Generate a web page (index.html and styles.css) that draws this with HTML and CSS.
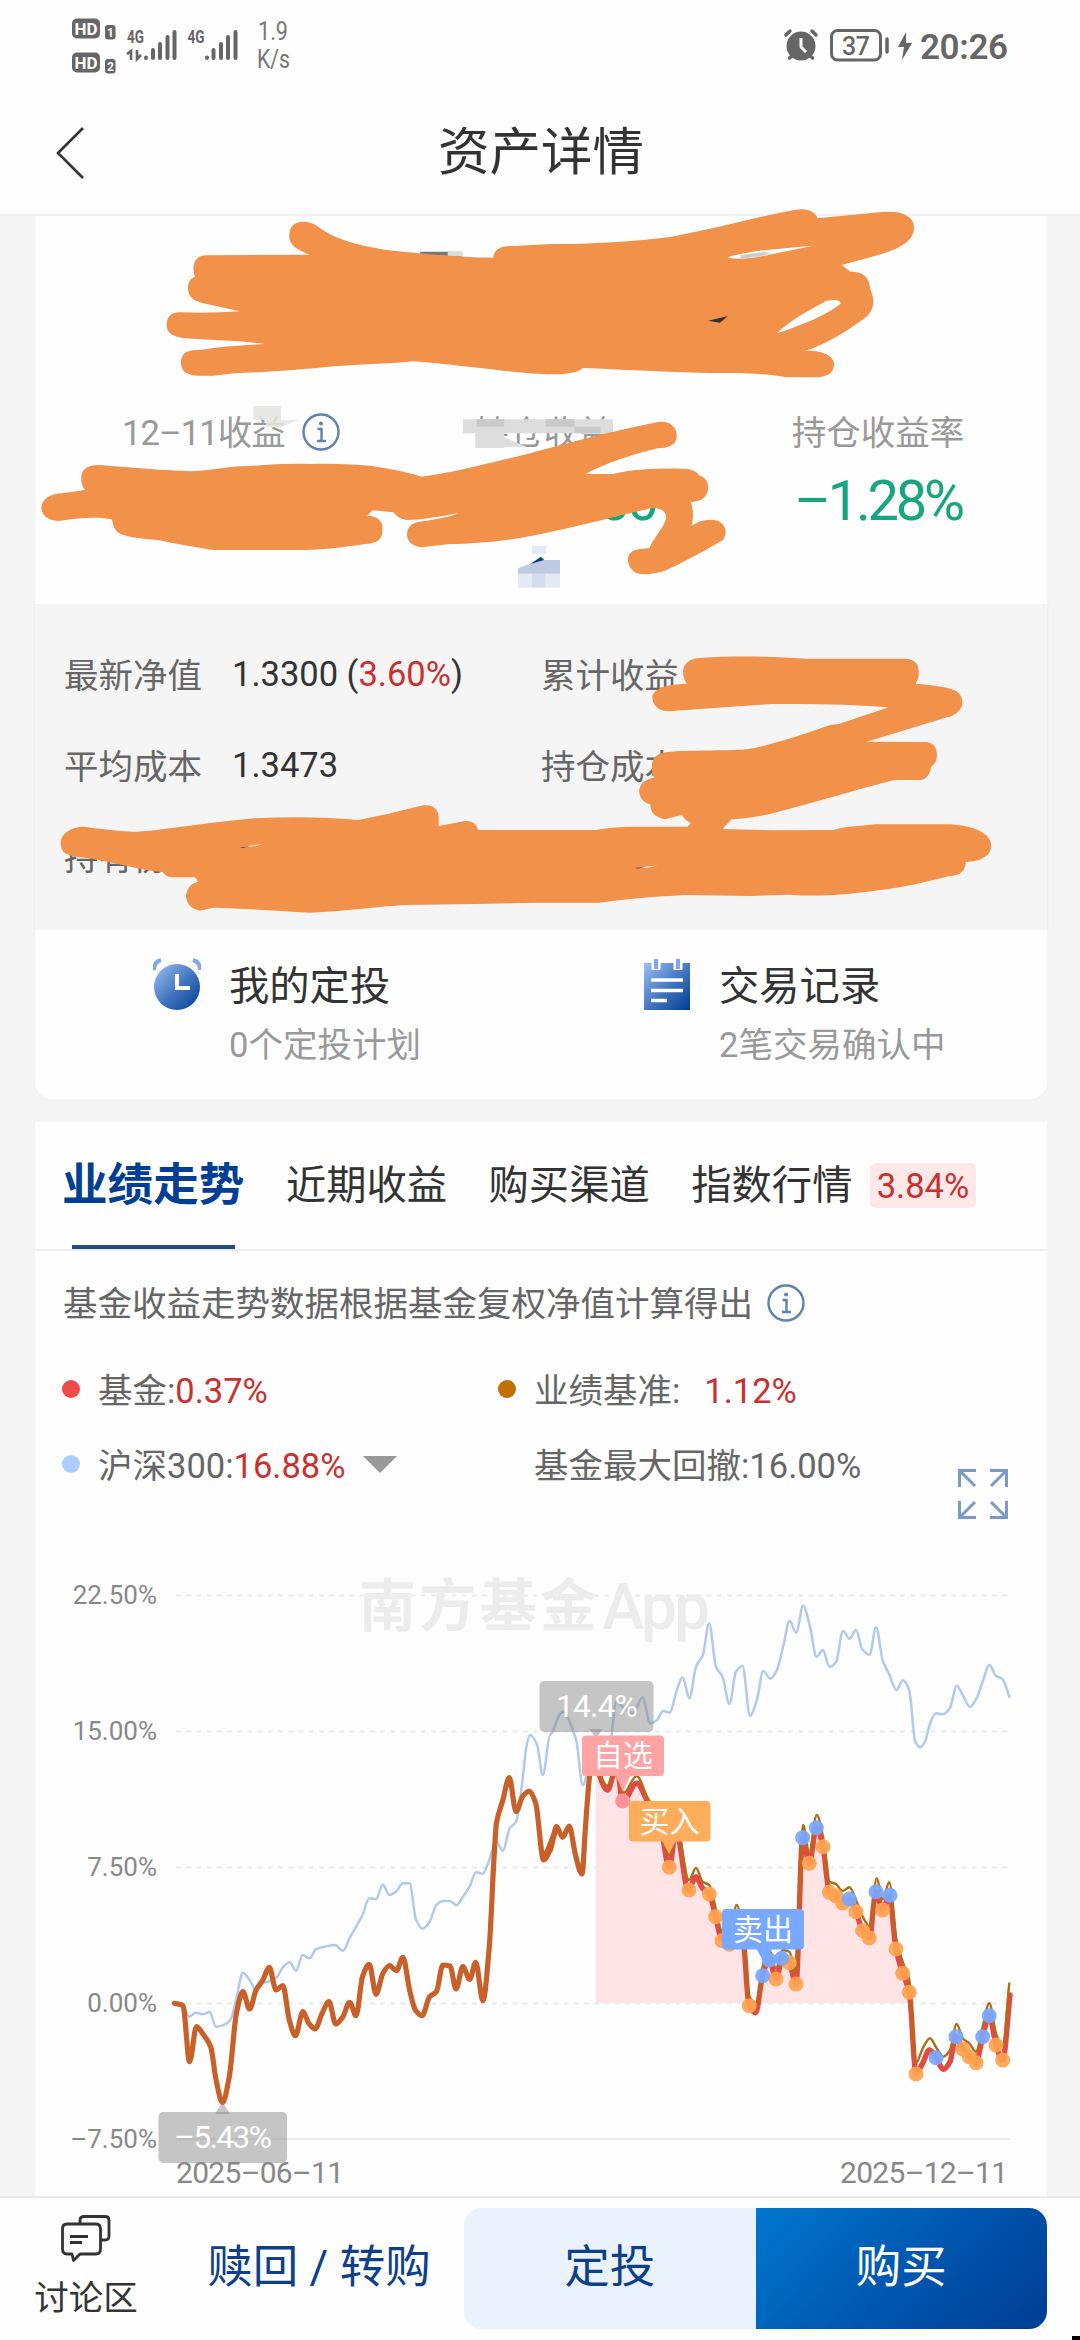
FILE: index.html
```html
<!DOCTYPE html>
<html lang="zh-CN">
<head>
<meta charset="utf-8">
<title>资产详情</title>
<link rel="stylesheet" href="styles.css">
</head>
<body>
<div class="screen">
  <header class="top">
    <div class="status">
      <svg class="status-left" width="280" height="70" viewBox="60 10 280 70">
        <g fill="#666">
          <rect x="72" y="18.500" width="28" height="20" rx="5"/><rect x="72" y="52.500" width="28" height="20" rx="5"/>
          <rect x="105" y="25" width="10.500" height="14.500" rx="3"/><rect x="105" y="59" width="10.500" height="14.500" rx="3"/>
        </g>
        <g class="sig-badge">
          <text x="74.500" y="34.500" textLength="23" lengthAdjust="spacingAndGlyphs">HD</text>
          <text x="74.500" y="68.500" textLength="23" lengthAdjust="spacingAndGlyphs">HD</text>
          <text class="sig-sub" x="107" y="37">1</text><text class="sig-sub" x="107" y="71">2</text>
        </g>
        <g class="sig-net">
          <text x="127" y="43" textLength="17" lengthAdjust="spacingAndGlyphs">4G</text>
          <text x="187.500" y="43" textLength="17" lengthAdjust="spacingAndGlyphs">4G</text>
        </g>
        <g stroke="#666" stroke-width="4" stroke-linecap="round" fill="none">
          <path d="M146 57.500v.5M153 50v8M160 44v14M167.500 37v21M174.500 32v26"/>
          <path d="M207 57.500v.5M213.500 50v8M221 44v14M228 37v21M235.500 32v26"/>
          <path stroke-width="2.600" stroke-linecap="butt" d="M127 54l4-3v9M137 50v9l4-4"/>
        </g>
        <text class="sig-speed" x="258" y="40" textLength="30" lengthAdjust="spacingAndGlyphs">1.9</text>
        <text class="sig-speed" x="257" y="67.500" textLength="33" lengthAdjust="spacingAndGlyphs">K/s</text>
      </svg>
      <svg class="status-right" width="250" height="70" viewBox="770 10 250 70">
        <circle cx="801" cy="46" r="14.500" fill="#666"/>
        <g fill="none" stroke="#666" stroke-width="3.500" stroke-linecap="round">
          <path d="M786 35l4-4M816 35l-4-4M789.500 58l3-3M812.500 58l-3-3"/>
          <rect x="831.500" y="30.500" width="49" height="29.500" rx="6" stroke-width="3"/>
          <path d="M887 39v13"/>
        </g>
        <path d="M801 38v9l5 5" fill="none" stroke="#fff" stroke-width="3"/>
        <path d="M906 32l-8 15h6l-2 13 10-17h-6z" fill="#666"/>
        <text class="st-batt" x="842" y="54.500" textLength="28">37</text>
        <text class="st-time" x="920" y="59" textLength="88">20:26</text>
      </svg>
    </div>
    <div class="nav">
      <svg class="back" width="30" height="54" viewBox="0 0 30 54"><path d="M27 2L2 27l25 25" fill="none" stroke="#333" stroke-width="2.600"/></svg>
      <h1>资产详情</h1>
    </div>
  </header>

  <section class="card asset">
    <div class="stats">
      <div class="stat s1"><div class="label"><span>12–11收益</span>
        <svg class="info" viewBox="0 0 38 38"><circle cx="19" cy="19" r="17.500"/><circle class="dot" cx="19" cy="10.500" r="2"/><path d="M15.500 16H19.500V28M15 28h9"/></svg></div></div>
      <div class="stat s2"><div class="label"><span>持仓收益</span></div><div class="value">00</div></div>
      <div class="stat s3"><div class="label"><span>持仓收益率</span></div><div class="value">–1.28%</div></div>
    </div>
    <div class="details">
      <div class="pair"><span class="k">最新净值</span><span class="v">1.3300 (<b>3.60%</b>)</span></div>
      <div class="pair"><span class="k">累计收益</span></div>
      <div class="pair"><span class="k">平均成本</span><span class="v">1.3473</span></div>
      <div class="pair"><span class="k">持仓成本</span></div>
      <div class="pair"><span class="k">持有份额</span></div>
    </div>
    <div class="actions">
      <div class="action">
        <svg width="48" height="54" viewBox="0 0 48 54">
          <defs><linearGradient id="blue" x1="0" y1="0" x2="1" y2="1"><stop offset="0" stop-color="#9dc0f5"/><stop offset=".55" stop-color="#3f72bd"/><stop offset="1" stop-color="#003c92"/></linearGradient></defs>
          <path d="M1 13Q1 5 8 3M47 13Q47 5 40 3" fill="none" stroke="#7fa8e6" stroke-width="4"/>
          <circle cx="24" cy="30" r="23" fill="url(#blue)"/><path d="M24 17v14h13" fill="none" stroke="#fff" stroke-width="4"/>
        </svg>
        <div><div class="a-title">我的定投</div><div class="a-sub">0个定投计划</div></div>
      </div>
      <div class="action">
        <svg width="48" height="54" viewBox="0 0 48 54">
          <rect x="1" y="6" width="46" height="47" fill="url(#blue)"/>
          <path d="M13 2v11M35 2v11" stroke="#fff" stroke-width="9"/><path d="M13 2v10M35 2v10" stroke="#7fa8e6" stroke-width="4"/>
          <path d="M8 23h32M8 33.500h32M8 43.500h16" stroke="#fff" stroke-width="3.500"/>
        </svg>
        <div><div class="a-title">交易记录</div><div class="a-sub">2笔交易确认中</div></div>
      </div>
    </div>
  </section>

  <section class="card perf">
    <nav class="tabs">
      <span class="tab active">业绩走势</span><span class="tab">近期收益</span><span class="tab">购买渠道</span><span class="tab">指数行情</span><span class="badge">3.84%</span>
    </nav>
    <div class="note"><span>基金收益走势数据根据基金复权净值计算得出</span>
      <svg class="info" viewBox="0 0 38 38"><circle cx="19" cy="19" r="17.500"/><circle class="dot" cx="19" cy="10.500" r="2"/><path d="M15.500 16H19.500V28M15 28h9"/></svg>
    </div>
    <div class="legend">
      <div class="item"><i class="bullet fund"></i><span>基金:<b>0.37%</b></span></div>
      <div class="item"><i class="bullet base"></i><span>业绩基准:<b class="gap">1.12%</b></span></div>
      <div class="item"><i class="bullet index"></i><span>沪深300:<b>16.88%</b></span><i class="caret"></i></div>
      <div class="item"><i class="bullet"></i><span>基金最大回撤:16.00%</span></div>
      <svg class="expand" width="50" height="50" viewBox="0 0 50 50"><path d="M1.500 18V1.500H18M2 2l15 15M32 1.500h16.500V18M48 2L33 17M1.500 32v16.500H18M2 48l15-15M48.500 32v16.500H32M48 48L33 33"/></svg>
    </div>
    <svg class="chart" width="1012" height="656" viewBox="35 1540 1012 656">
      <g class="watermark"><text x="359" y="1626" textLength="238">南方基金</text><text class="app" x="602" y="1629" textLength="108">App</text></g>
      <g class="grid"><path d="M176 1595.500H1010M176 1731.500H1010M176 1867.500H1010M176 2003.500H1010"/></g>
      <path class="axis" d="M176 2139H1010"/>
      <g class="ylabels"><text x="157" y="1604">22.50%</text><text x="157" y="1740">15.00%</text><text x="157" y="1876">7.50%</text><text x="157" y="2012">0.00%</text><text x="157" y="2148">–7.50%</text></g>
      <g class="xlabels"><text x="176" y="2182.500" textLength="168">2025–06–11</text><text x="840" y="2182.500" textLength="168">2025–12–11</text></g>
      <g id="plot"></g>
      <g class="tip">
        <path d="M589 1729h14l-7 9zM215 2114l7.500-12 7.500 12z"/>
        <rect x="539.500" y="1681" width="114" height="51" rx="5"/><rect x="158.500" y="2112" width="128.500" height="51" rx="5"/>
        <text x="556" y="1717" textLength="82">14.4%</text><text x="174" y="2147.500" textLength="98">–5.43%</text>
      </g>
      <g class="tag">
        <path fill="#ffa3a5" d="M615 1774h16l-8 18z"/><rect fill="#ffa3a5" x="582" y="1735.500" width="82" height="40.500" rx="4"/>
        <path fill="#ffad5a" d="M661 1839h16l-8 15z"/><rect fill="#ffad5a" x="629" y="1801" width="81.500" height="40.500" rx="4"/>
        <path fill="#78a8ff" d="M756 1948h16l-6 18z"/><rect fill="#78a8ff" x="722" y="1909" width="82" height="40.500" rx="4"/>
        <text x="623" y="1766">自选</text><text x="669.500" y="1831.500">买入</text><text x="763" y="1939.500">卖出</text>
      </g>
    </svg>
  </section>

  <footer class="bottom">
    <div class="talk">
      <svg width="50" height="48" viewBox="0 0 50 48" fill="none" stroke="#333" stroke-width="2.800" stroke-linejoin="round">
        <path d="M19 9V5Q19 1.500 23 1.500H44Q48 1.500 48 5V21Q48 25 44 25H40"/>
        <path d="M6 9H35Q39.500 9 39.500 14V34Q39.500 39 35 39H19L12.500 45.500 11 39H6Q1.500 39 1.500 34V14Q1.500 9 6 9Z"/><path d="M9 21.500H27M9 27.500H21"/>
      </svg>
      <span>讨论区</span>
    </div>
    <div class="redeem">赎回 / 转购</div>
    <div class="buttons"><div class="plan">定投</div><div class="buy">购买</div></div>
  </footer>

  <svg class="marks" width="1080" height="940" viewBox="0 0 1080 940">
    <g transform="translate(0 200) scale(.6888 .33333)">
      <path fill="#777" d="M610 155h60v20h-60z"/><path fill="#ddd" d="M650 155h22v14h-22zM672 658h218v42h-218zM690 700h42v44h-42zM732 712l34 30h-34z"/>
      <path fill="#c9c9c9" d="M692 658h40v22h-40zM792 658h42v22h-42zM834 680h38v20h-38z"/>
      <path fill="#e4e4e2" d="M368 618h40v42h-40zM386 660h48l-26 22h-22z" fill-opacity=".85"/>
      <path fill="#e4eaf3" d="M772 1038h21v25h-21zM752 1121h20v42h-20zM792 1121h21v42h-21z"/><path fill="#d5dcec" d="M772 1121h20v42h-20z"/>
      <path fill="#becae1" d="M752 1105L785 1080H813V1121H752Z"/><path fill="#0b3c8e" d="M770 1092L785 1070 790 1080Z"/>
      <g fill="#f1914a" fill-rule="evenodd">
      <path d="M420 105C420 60 445 55 462 80C490 125 540 148 600 158C650 168 690 173 716 173C718 145 728 137 745 138L800 132C860 132 920 125 975 110C1040 85 1100 50 1155 29C1175 22 1185 40 1187 55L1280 36C1310 30 1328 50 1327 85C1326 120 1310 145 1275 165L1222 195 1235 215C1258 215 1262 240 1264 270C1272 310 1268 340 1248 365C1225 400 1200 430 1170 452C1200 450 1212 475 1211 495C1210 520 1200 533 1180 532L1140 531C1120 522 1080 518 1030 519C960 516 900 508 846 504C840 520 815 525 790 522C740 518 670 495 600 484C560 492 520 494 490 498C430 510 380 517 340 520L310 527H285C265 523 262 505 263 480C265 455 275 449 290 450C320 440 350 437 384 432C350 422 305 420 268 415C248 410 241 395 242 370C243 345 252 334 264 337C290 340 320 338 348 334L295 310C275 300 273 280 273 262C273 245 277 235 283 231C278 200 281 166 300 166L450 164C430 150 418 130 420 105ZM1056 172C1090 150 1140 145 1180 137L1110 167C1090 178 1060 178 1056 172ZM1128 400C1150 355 1180 325 1200 302C1215 296 1222 303 1220 312C1200 345 1165 375 1128 400Z"/>
      <path d="M150 796C190 803 240 812 280 814C310 810 330 800 350 799C390 795 415 790 450 792C490 790 520 795 540 798C570 808 595 818 612 830C650 820 680 805 740 775C800 745 870 700 950 668C975 655 985 690 982 715C981 735 970 745 955 745C915 765 880 790 850 822H890C920 808 950 805 990 806C1005 806 1012 815 1015 826C1027 835 1029 855 1028 868C1026 890 1020 905 1003 906C1007 930 1007 955 1004 977C1015 960 1030 955 1042 962C1055 975 1056 1000 1050 1020C1020 1055 990 1090 965 1112C945 1125 925 1128 918 1110C908 1090 908 1050 930 1047L943 1044C950 1010 965 980 967 955C968 935 960 922 945 925C900 945 850 975 800 995C750 1020 700 1030 650 1033L612 1042C597 1040 590 1020 591 1000C592 975 600 965 620 962C640 955 655 950 665 939C640 950 610 960 590 960C578 955 575 945 571 937L541 931 533 947C552 948 557 970 555 995C555 1015 548 1030 530 1032C500 1042 470 1050 430 1050H310C280 1040 250 1030 230 1020C200 1015 180 1010 170 995C163 980 165 970 162 958C145 950 120 952 85 963C65 960 60 940 60 920C62 895 75 880 90 880L124 870C117 855 117 835 119 820C122 800 135 792 150 796Z"/>
      </g>
      <path fill="#333" d="M1028 362L1057 348 1045 368Z"/><path fill="#ccc" d="M1075 166l35-10 8 4-12 8-31 9z"/>
    </g>
    <g transform="translate(0 590) scale(.6888 .33333)">
      <path fill="#f1914a" d="M1020 203C1060 198 1120 198 1170 206H1315C1330 208 1334 225 1334 250C1334 265 1331 275 1329 281C1345 283 1365 288 1380 296C1395 305 1398 325 1397 345C1394 365 1385 378 1375 382L1258 455 1345 456C1358 460 1361 480 1360 500C1360 515 1356 525 1352 530C1350 550 1346 570 1335 570H1298C1240 600 1180 640 1130 665C1105 680 1080 685 1062 688L1049 717 1128 721 1210 720C1230 708 1255 708 1270 703H1380C1415 708 1439 730 1439 768C1439 795 1425 815 1402 816C1402 840 1395 858 1378 858C1340 878 1320 890 1260 905C1220 915 1190 920 1147 914L1090 918 995 915C930 922 900 930 870 938H780L690 942 590 945C540 950 500 965 450 968C400 962 350 955 310 953L290 962C275 955 270 935 270 915C272 890 280 878 288 875L283 862H250C240 860 238 850 236 846C200 840 160 815 130 805C110 800 98 797 92 785C85 765 87 735 100 722C110 708 122 708 132 713C155 718 175 725 200 725C240 720 290 700 370 685C420 680 470 680 520 690C560 675 590 658 615 646C630 642 637 660 637 685V708L675 693C688 692 692 705 694 720H865C890 710 910 710 930 710H998L1003 700C995 690 992 682 990 675L965 688C950 682 944 665 944 643C930 635 928 615 928 600C930 575 940 567 950 563C946 550 946 530 947 515C950 495 960 486 975 485C1010 480 1060 483 1085 478C1130 460 1170 430 1205 405L1218 402 1290 352C1230 342 1180 342 1120 342L970 364C952 360 947 340 947 320C950 295 965 283 997 281C992 265 990 245 993 230C998 210 1008 204 1020 203Z"/>
      <path fill="#eee" d="M350 771L380 762 372 768ZM922 834L955 826 940 833Z"/><path fill="#555" d="M348 772l14-3-9 5zM922 833l14-3-10 6z"/>
    </g>
  </svg>
  <i class="corner"></i>
</div>
<script src="chart.js"></script>
</body>
</html>
```
FILE: styles.css
```css
* { box-sizing: border-box; }
body { margin: 0; background: #f4f4f4; font-family: Roboto, "Noto Sans CJK SC", sans-serif; color: #333; }
b, i { font-weight: 400; font-style: normal; }
.screen { position: relative; width: 1080px; height: 2340px; overflow: hidden; display: flex; flex-direction: column; align-items: center; }

.top { width: 100%; height: 216px; background: #fefefe; border-bottom: 2px solid #f0f0f0; flex: none; }
.status { display: flex; justify-content: space-between; padding: 10px 60px 0; height: 94px; }
.sig-badge { fill: #fff; font-weight: 700; font-size: 17px; }
.sig-sub { font-size: 12px; }
.sig-net { fill: #666; font-weight: 700; font-size: 19px; }
.sig-speed { fill: #777; font-size: 25px; }
.st-batt { fill: #666; font-weight: 500; font-size: 25px; }
.st-time { fill: #666; font-weight: 600; font-size: 35px; }
.nav { display: grid; grid-template-columns: 120px 1fr 118px; align-items: center; height: 118px; }
.back { margin-left: 56px; }
h1 { margin: 0; font-size: 51.5px; font-weight: 400; line-height: 60px; text-align: center; }

.card { width: 1012px; margin-left: 2px; background: #fefefe; flex: none; }
.asset { height: 883px; border-radius: 0 0 17px 17px; display: flex; flex-direction: column; }
.stats { height: 388px; padding-top: 190px; display: flex; justify-content: space-between; }
.stat { display: flex; flex-direction: column; align-items: center; }
.s1 { width: 392px; }
.s1 span { letter-spacing: -0.9px; }
.s2 { width: 228px; margin-left: -49px; }
.s3 { width: 338px; }
.label { display: flex; align-items: center; gap: 17px; height: 52px; font-size: 34.5px; color: #999; white-space: nowrap; }
.label span, .note span { padding-bottom: 5px; }
.value { font-size: 56px; line-height: 87px; color: #18a680; letter-spacing: -3.2px; }
.s2 .value { align-self: flex-end; padding-right: 2px; }
.info { width: 38px; height: 38px; fill: none; stroke: #6080b0; stroke-width: 2.400; }
.info .dot { fill: #6080b0; stroke: none; }
.details { height: 326px; margin: 0 -2px; padding: 24px 0 0 29px; background: #f5f5f5; border: solid #f0f0f0; border-width: 0 2px; display: grid; grid-template-columns: 477px 1fr; grid-auto-rows: 91px; }
.pair { display: flex; align-items: center; gap: 30px; font-size: 34.5px; white-space: nowrap; }
.k { color: #666; padding-bottom: 2px; }
.v { color: #333; }
.v b, .legend b { color: #c9302f; }
.actions { display: flex; padding: 27px 0 0 118px; }
.action { width: 490px; flex: none; display: flex; gap: 28px; }
.action + .action { width: 400px; }
.a-title { font-size: 40.3px; line-height: 60px; }
.a-sub { font-size: 34.5px; line-height: 56px; color: #999; }

.perf { margin-top: 23px; height: 1074px; display: flex; flex-direction: column; }
.tabs { height: 129px; flex: none; display: flex; align-items: center; gap: 41.5px; padding: 0 27px; border-bottom: 2px solid #eee; font-size: 40.3px; white-space: nowrap; }
.tab { height: 127px; line-height: 127px; }
.active { font-size: 45.6px; font-weight: 700; color: #003f94; display: flex; flex-direction: column; align-items: center; }
.active::after { content: ""; flex: none; width: 163px; height: 4px; margin-top: -4px; background: #1f4a8c; }
.badge { margin-left: -24px; width: 106px; height: 45px; border-radius: 6px; background: #ffe8e8; color: #c9302f; font-size: 34.500px; line-height: 46px; text-align: center; }
.note { height: 104px; flex: none; padding: 0 28px; display: flex; align-items: center; gap: 14px; font-size: 34.5px; color: #666; }
.legend { position: relative; height: 185px; flex: none; padding: 0 27px; display: grid; grid-template-columns: 436px 1fr; grid-template-rows: 75px 75px; color: #666; font-size: 34.5px; }
.item { display: flex; align-items: center; white-space: nowrap; height: 68px; }
.item span { padding-bottom: 2px; }
.bullet { width: 18px; height: 18px; border-radius: 50%; margin-right: 18px; }
.fund { background: #ef4b4b; }
.base { background: #c07000; }
.index { background: #adcbff; }
.gap { margin-left: 24px; }
.caret { border: solid transparent; border-width: 17px 17px 0; border-top-color: #999; margin-left: 18px; }
.expand { position: absolute; left: 923px; top: 114px; fill: none; stroke: #7c9ac6; stroke-width: 3; }

.chart { flex: none; display: block; }
.watermark { fill: #ececec; font-weight: 700; font-size: 57px; }
.app { font-weight: 500; font-size: 64px; }
.grid { stroke: #eee; stroke-width: 2.500; stroke-dasharray: 5 5.200; }
.axis { stroke: #ececec; stroke-width: 2; }
.ylabels { fill: #888; font-size: 26px; text-anchor: end; }
.xlabels { fill: #888; font-size: 30px; }
.tip { fill: rgba(140, 140, 140, .5); }
.tip text { fill: #fff; font-size: 32px; }
.tag text { fill: #fff; font-size: 30px; text-anchor: middle; }
.plot-index { fill: none; stroke: #b0c9ec; stroke-width: 2.500; }
.plot-area { fill: #ffe4e5; }
.plot-fund { fill: none; stroke: #e24b43; stroke-width: 5.400; stroke-linejoin: round; stroke-linecap: round; }
.plot-early { fill: none; stroke: #c8602a; stroke-width: 5.200; stroke-linejoin: round; stroke-linecap: round; }
.plot-base { fill: none; stroke: #b26d14; stroke-width: 2.400; }
.buy-dot { fill: #ffa351; fill-opacity: .93; }
.sell-dot { fill: #78a8ff; fill-opacity: .93; }
.pick-dot { fill: #ff9297; }

.bottom { width: 100%; height: 144px; flex: none; background: #fefefe; border-top: 2px solid #e9e9e9; display: flex; padding-left: 35px; }
.talk { width: 102px; padding-top: 17px; display: flex; flex-direction: column; align-items: center; font-size: 34.5px; line-height: 60px; white-space: nowrap; gap: 5px; }
.redeem { width: 327px; padding-left: 37px; text-align: center; padding-right: 0; font-size: 45.500px; line-height: 140px; color: #0d4088; white-space: nowrap; }
.buttons { width: 583px; height: 121px; margin-top: 10px; border-radius: 18px; overflow: hidden; display: grid; grid-template-columns: 1fr 1fr; text-align: center; font-size: 45.500px; line-height: 120px; color: #0d4088; }
.plan { background: #eaf2fe; }
.buy { background: linear-gradient(135deg, #0077cf, #0058b0 50%, #003d94); color: #fff; }

.marks { position: absolute; left: 0; top: 0; }
.corner { position: absolute; right: 0; bottom: 0; width: 8px; height: 4px; background: #000; }
```
FILE: chart.js
```js
// Samples are stored on four drawing grids: origin and units per pixel.
const grids = {
  low:  [0, 1860, 2.8, 3],
  high: [0, 1540, 2.8, 3],
  mid:  [540, 1560, 2.904, 3],
  end:  [560, 1740, 3, 3]
};
function pts(grid, list) {
  const [ox, oy, sx, sy] = grids[grid];
  return list.trim().split(/\s+/).map(p => {
    const [x, y] = p.split(',').map(Number);
    return [ox + x / sx, oy + y / sy];
  });
}
// Monotone cubic interpolation: turning points stay on the samples.
function curve(p) {
  const n = p.length, d = [], m = [];
  for (let i = 0; i < n - 1; i++) d.push((p[i + 1][1] - p[i][1]) / (p[i + 1][0] - p[i][0]));
  m[0] = d[0]; m[n - 1] = d[n - 2];
  for (let i = 1; i < n - 1; i++) m[i] = d[i - 1] * d[i] <= 0 ? 0 : 2 * d[i - 1] * d[i] / (d[i - 1] + d[i]);
  let s = 'M' + p[0].map(v => v.toFixed(1));
  for (let i = 0; i < n - 1; i++) {
    const h = (p[i + 1][0] - p[i][0]) / 3;
    s += 'C' + [p[i][0] + h, p[i][1] + m[i] * h, p[i + 1][0] - h, p[i + 1][1] - m[i + 1] * h, p[i + 1][0], p[i + 1][1]].map(v => v.toFixed(1)).join(' ');
  }
  return s;
}
const index = [
  ...pts('low', '492,430 512,436 530,470 548,458 568,463 587,456 605,500 625,496 645,480 660,425 680,338 700,362 715,388 735,370 755,363 775,352 792,322 811,307 829,332 847,285 867,295 885,267 905,261 938,255 960,272 980,232 1015,165 1034,115 1053,117 1072,74 1090,105 1110,93 1128,70 1147,70 1165,180 1184,206 1203,185 1222,135 1240,123 1260,123 1278,136 1296,110 1315,80 1333,37 1352,41 1368,5'),
  ...pts('high', '1390,905 1408,933 1427,865 1445,845 1463,720 1474,620 1484,585 1503,612 1520,705 1540,590'),
  ...pts('mid', '27,525 65,455 105,540 124,675 150,600 175,620 195,600 208,525 221,425 240,440 270,460 298,412 320,490 340,480 358,453 377,458 396,395 414,352 434,415 453,320 473,285 491,190 511,320 530,350 550,432 569,335 588,318 610,467 630,420 648,333 669,356 688,330 707,255 725,182 744,218 764,137 784,200 803,290 821,270 841,320 860,305 880,213 899,236 918,210 936,268 957,284 976,202 995,300 1015,345 1035,390 1054,361 1072,390 1090,545 1104,562 1118,545 1133,490 1150,460 1170,463 1190,445 1210,377 1229,408 1248,441 1268,415 1287,360 1305,314 1324,347 1343,357 1364,413')
];
const early = [
  ...pts('low', '488,430 512,436 531,605 550,500 570,525 590,560 605,660 623,728 642,650 662,460 680,395 699,447 717,390 736,360 754,322 773,390 792,377 810,480 827,527 848,455 865,490 882,507 902,460 921,425 940,492 960,470 979,427 997,467 1015,350 1034,313 1053,403 1072,340 1091,317 1110,332 1128,292 1147,390 1163,450 1182,467 1203,410 1222,395 1240,315 1260,318 1277,387 1296,320 1315,358 1332,307 1352,422 1370,260'),
  ...pts('high', '1383,960 1390,850 1408,780 1426,713 1445,815 1463,770 1482,753 1500,790 1522,960 1540,930 1558,860'),
  ...pts('mid', '10,897 30,870 48,800 66,832 85,798 103,885 122,942 132,800 145,640 162,545')
];
const fund = pts('end', '108,5 120,110 143,150 162,100 172,90 188,185 230,130 263,185 300,250 328,382 348,270 385,450 408,410 428,445 448,462 467,530 485,600 508,610 530,540 550,600 567,795 587,818 608,705 628,660 648,716 668,655 688,668 708,732 728,293 748,370 769,263 789,320 808,455 830,470 848,487 868,477 888,515 908,572 928,593 948,455 968,510 988,466 1008,627 1028,700 1048,757 1068,1000 1088,970 1108,930 1128,953 1150,988 1170,965 1188,890 1208,927 1228,950 1248,968 1268,890 1288,827 1308,915 1328,960 1350,765');
const base = pts('end', '108,5 120,105 143,138 162,90 172,80 190,160 230,108 263,175 300,235 328,345 348,250 387,420 408,384 428,425 448,435 467,505 485,575 508,590 530,495 550,590 568,770 590,790 608,680 628,630 648,685 668,630 688,635 708,700 729,255 748,340 770,225 789,290 808,425 828,432 848,453 868,442 888,480 908,530 930,560 950,415 968,478 988,427 1008,595 1028,665 1048,720 1068,970 1088,925 1110,895 1130,925 1150,950 1170,930 1190,852 1208,895 1228,910 1248,935 1268,860 1288,790 1308,880 1328,920 1348,728');
const sold = pts('end', '608,707 628,660 665,655 728,293 769,263 868,477 948,455 990,466 1128,953 1188,890 1268,890 1288,827');
const bought = pts('end', '328,382 387,450 448,462 467,530 486,602 508,613 568,797 648,717 688,668 708,732 748,370 789,320 808,457 828,468 848,489 888,515 908,572 928,594 968,510 1008,627 1028,700 1048,757 1068,1002 1208,927 1228,950 1248,968 1308,915 1328,960');
const dots = (list, cls) => list.map(([x, y]) => `<circle class="${cls}" cx="${x.toFixed(1)}" cy="${y.toFixed(1)}" r="7.500"/>`).join('');
document.getElementById('plot').innerHTML =
  `<clipPath id="zero"><path d="M596 1700H915V2003H596Z"/></clipPath>` +
  `<path class="plot-area" clip-path="url(#zero)" d="${curve(fund)}L1010 2100H596Z"/>` +
  `<path class="plot-index" d="${curve(index)}"/>` +
  `<path class="plot-fund" d="${curve(fund)}"/><path class="plot-early" d="${curve(early)}"/><path class="plot-base" d="${curve(base)}"/>` +
  dots(bought, 'buy-dot') + dots(sold, 'sell-dot') + dots([[622.7, 1801]], 'pick-dot');
```
